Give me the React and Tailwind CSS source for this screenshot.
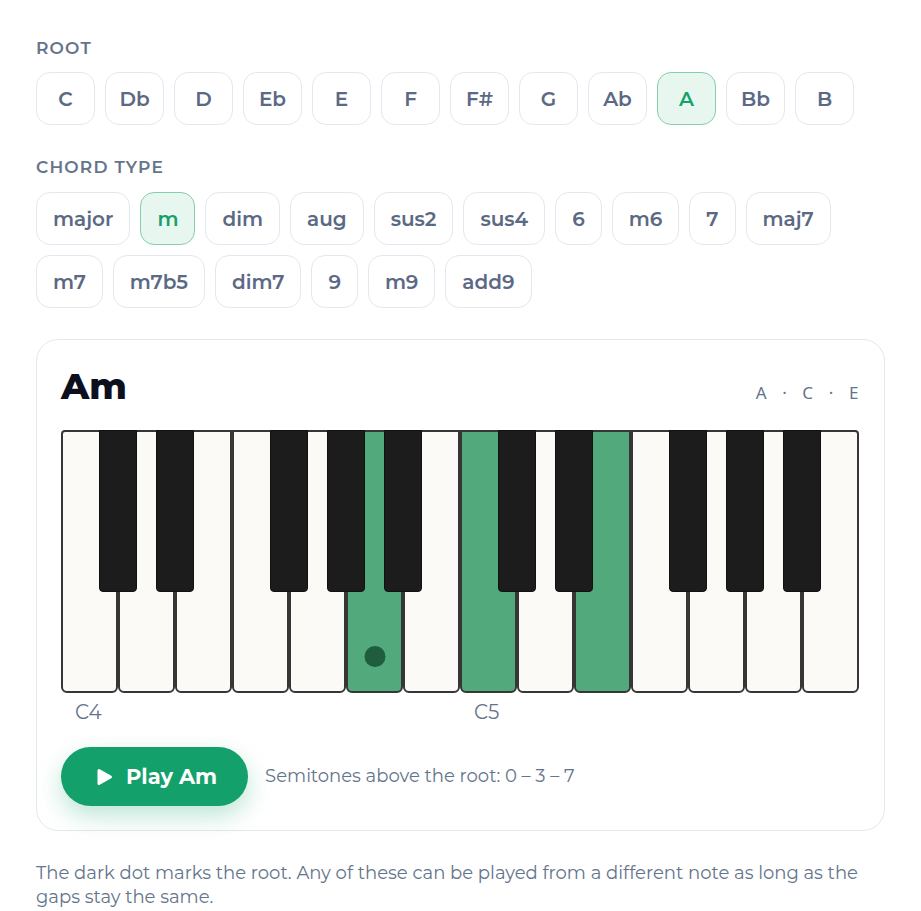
import { useState } from 'react'

const ROOTS = ['C', 'Db', 'D', 'Eb', 'E', 'F', 'F#', 'G', 'Ab', 'A', 'Bb', 'B']
const TYPES = [
  ['major', 'm', 'dim', 'aug', 'sus2', 'sus4', '6', 'm6', '7', 'maj7'],
  ['m7', 'm7b5', 'dim7', '9', 'm9', 'add9'],
]
const WHITE = 14
const KEY_W = 57
// black keys sit on the boundary after these white key indexes
const BLACKS = [1, 2, 4, 5, 6, 8, 9, 11, 12, 13]
const ON = [5, 7, 9]
const ROOT_KEY = 5

const font = { fontFamily: '"Montserrat", Inter, "Noto Sans", sans-serif' }

const Chip = ({ label, active, onClick, fixed }) => (
  <button
    type="button"
    onClick={onClick}
    className={
      'h-[53px] rounded-[14px] border-[1.5px] text-[20px] font-semibold ' +
      (fixed ? 'w-[59px] ' : 'px-4 ') +
      (active
        ? 'border-[#86cfa9] bg-[#e7f6ee] text-[#16a06b]'
        : 'border-[#e3e7ee] bg-white text-[#5b6984]')
    }
  >
    {label}
  </button>
)

const Piano = () => (
  <div className="relative flex h-[263px] w-[798px]">
    {Array.from({ length: WHITE }).map((_, i) => (
      <div
        key={i}
        className={
          'relative h-full w-[57px] rounded-b-[6px] border-2 border-[#363636] ' +
          (i === 0 ? 'rounded-tl-[4px] ' : '') +
          (i === WHITE - 1 ? 'rounded-tr-[4px] ' : '') +
          (ON.includes(i) ? 'bg-[#52a97b]' : 'bg-[#fbfaf6]')
        }
      >
        {i === ROOT_KEY && (
          <div className="absolute bottom-[24px] left-1/2 h-[21px] w-[21px] -translate-x-1/2 rounded-full bg-[#1e5d3d]" />
        )}
      </div>
    ))}
    {BLACKS.map((b) => (
      <div
        key={b}
        className="absolute top-0 h-[162px] w-[38px] rounded-b-[4px] border border-[#111] bg-[#1c1c1c]"
        style={{ left: b * KEY_W - 19 }}
      />
    ))}
  </div>
)

export default function App() {
  const [root, setRoot] = useState('A')
  const [type, setType] = useState('m')
  const name = root + (type === 'major' ? '' : type)

  return (
    <div className="min-h-screen bg-white px-9 pt-[38px]" style={font}>
      <div className="text-[17px] font-semibold leading-5 tracking-[0.07em] text-[#64748b]">ROOT</div>
      <div className="mt-[14px] flex gap-[10px]">
        {ROOTS.map((r) => (
          <Chip key={r} label={r} fixed active={r === root} onClick={() => setRoot(r)} />
        ))}
      </div>

      <div className="mt-[32px] text-[17px] font-semibold leading-5 tracking-[0.07em] text-[#64748b]">CHORD TYPE</div>
      <div className="mt-[15px] flex flex-col gap-[10px]">
        {TYPES.map((row, i) => (
          <div key={i} className="flex gap-[10px]">
            {row.map((t) => (
              <Chip key={t} label={t} active={t === type} onClick={() => setType(t)} />
            ))}
          </div>
        ))}
      </div>

      <div className="mt-[31px] rounded-[22px] border border-[#e3e7ee] bg-white px-6 pb-6 pt-[26px]">
        <div className="flex items-center justify-between">
          <h2 className="text-[36px] font-extrabold leading-10 text-[#0b0f1e]">{name}</h2>
          <div
            className="-mr-[4px] mt-[14px] text-[17px] tracking-[0.33em] text-[#64748b]"
            style={{ fontFamily: '"Noto Sans", "Open Sans", sans-serif' }}
          >
            A · C · E
          </div>
        </div>

        <div className="mt-6">
          <Piano />
          <div className="mt-[7px] flex h-6 text-[20px] leading-6 text-[#64748b]">
            <span className="w-[399px] pl-[14px]">C4</span>
            <span className="pl-[14px]">C5</span>
          </div>
        </div>

        <div className="mt-[23px] flex items-center gap-[17px]">
          <button
            type="button"
            className="flex h-[59px] items-center gap-3 rounded-full bg-[#13a06a] pl-[33px] pr-[31px] text-[21px] font-bold text-white shadow-[0_10px_24px_rgba(19,160,106,0.28)]"
          >
            <svg width="20" height="20" viewBox="0 0 20 20" aria-hidden="true">
              <path d="M5 3.5 L16.5 10 L5 16.5 Z" fill="white" stroke="white" strokeWidth="3" strokeLinejoin="round" />
            </svg>
            Play {name}
          </button>
          <span className="text-[18px] text-[#64748b]">Semitones above the root: 0 – 3 – 7</span>
        </div>
      </div>

      <p className="mt-[30px] text-[18px] leading-6 text-[#64748b]">
        The dark dot marks the root. Any of these can be played from a different note as long as the gaps stay the same.
      </p>
    </div>
  )
}
